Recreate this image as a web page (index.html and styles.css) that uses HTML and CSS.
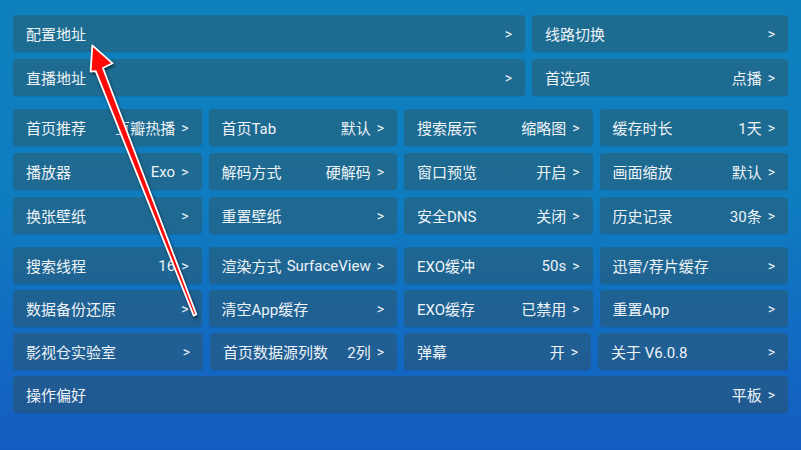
FILE: index.html
```html
<!DOCTYPE html>
<html lang="zh-CN">
<head>
<meta charset="utf-8">
<title>设置</title>
<link rel="stylesheet" href="styles.css">
</head>
<body>
<div class="page">
  <div class="group">
    <div class="row row-2-1">
      <div class="card"><span class="label">配置地址</span><span class="val"><span class="chev">&gt;</span></span></div>
      <div class="card"><span class="label">线路切换</span><span class="val"><span class="chev">&gt;</span></span></div>
    </div>
    <div class="row row-2-1">
      <div class="card"><span class="label">直播地址</span><span class="val"><span class="chev">&gt;</span></span></div>
      <div class="card"><span class="label">首选项</span><span class="val">点播<span class="chev">&gt;</span></span></div>
    </div>
  </div>
  <div class="group">
    <div class="row row-4">
      <div class="card"><span class="label">首页推荐</span><span class="val">豆瓣热播<span class="chev">&gt;</span></span></div>
      <div class="card"><span class="label">首页Tab</span><span class="val">默认<span class="chev">&gt;</span></span></div>
      <div class="card"><span class="label">搜索展示</span><span class="val">缩略图<span class="chev">&gt;</span></span></div>
      <div class="card"><span class="label">缓存时长</span><span class="val">1天<span class="chev">&gt;</span></span></div>
    </div>
    <div class="row row-4">
      <div class="card"><span class="label">播放器</span><span class="val">Exo<span class="chev">&gt;</span></span></div>
      <div class="card"><span class="label">解码方式</span><span class="val">硬解码<span class="chev">&gt;</span></span></div>
      <div class="card"><span class="label">窗口预览</span><span class="val">开启<span class="chev">&gt;</span></span></div>
      <div class="card"><span class="label">画面缩放</span><span class="val">默认<span class="chev">&gt;</span></span></div>
    </div>
    <div class="row row-4">
      <div class="card"><span class="label">换张壁纸</span><span class="val"><span class="chev">&gt;</span></span></div>
      <div class="card"><span class="label">重置壁纸</span><span class="val"><span class="chev">&gt;</span></span></div>
      <div class="card"><span class="label">安全DNS</span><span class="val">关闭<span class="chev">&gt;</span></span></div>
      <div class="card"><span class="label">历史记录</span><span class="val">30条<span class="chev">&gt;</span></span></div>
    </div>
  </div>
  <div class="group group-tight">
    <div class="row row-4">
      <div class="card"><span class="label">搜索线程</span><span class="val">16<span class="chev">&gt;</span></span></div>
      <div class="card"><span class="label">渲染方式</span><span class="val">SurfaceView<span class="chev">&gt;</span></span></div>
      <div class="card"><span class="label">EXO缓冲</span><span class="val">50s<span class="chev">&gt;</span></span></div>
      <div class="card"><span class="label">迅雷/荐片缓存</span><span class="val"><span class="chev">&gt;</span></span></div>
    </div>
    <div class="row row-4">
      <div class="card"><span class="label">数据备份还原</span><span class="val"><span class="chev">&gt;</span></span></div>
      <div class="card"><span class="label">清空App缓存</span><span class="val"><span class="chev">&gt;</span></span></div>
      <div class="card"><span class="label">EXO缓存</span><span class="val">已禁用<span class="chev">&gt;</span></span></div>
      <div class="card"><span class="label">重置App</span><span class="val"><span class="chev">&gt;</span></span></div>
    </div>
    <div class="row row-4b">
      <div class="card"><span class="label">影视仓实验室</span><span class="val"><span class="chev">&gt;</span></span></div>
      <div class="card"><span class="label">首页数据源列数</span><span class="val">2列<span class="chev">&gt;</span></span></div>
      <div class="card"><span class="label">弹幕</span><span class="val">开<span class="chev">&gt;</span></span></div>
      <div class="card"><span class="label">关于 V6.0.8</span><span class="val"><span class="chev">&gt;</span></span></div>
    </div>
    <div class="row row-1">
      <div class="card"><span class="label">操作偏好</span><span class="val">平板<span class="chev">&gt;</span></span></div>
    </div>
  </div>
</div>
<svg class="arrow" width="801" height="450" viewBox="0 0 801 450" xmlns="http://www.w3.org/2000/svg">
  <polygon points="92.3,45.3 112.6,63.3 102.9,68.0 196.3,314.4 193.7,315.6 95.7,71.2 90.6,71.6" fill="#ff0808" stroke="#ffffff" stroke-width="1.8" stroke-linejoin="round"/>
</svg>
</body>
</html>
```

FILE: styles.css
```css
html, body {
  margin: 0;
  padding: 0;
}
body {
  width: 801px;
  height: 450px;
  overflow: hidden;
  background: linear-gradient(180deg, #0e81bd 0%, #0f7cc0 45%, #1268c2 80%, #155cc0 100%);
  font-family: Roboto, "Noto Sans CJK SC", sans-serif;
  color: #eef3f7;
  position: relative;
}
.page {
  padding: 15px 13px 0 13px;
}
.group {
  display: flex;
  flex-direction: column;
  gap: 7px;
  margin-bottom: 13px;
}
.group-tight {
  gap: 6px;
}
.row {
  display: grid;
  gap: 7px;
}
.row-2-1 {
  grid-template-columns: 2fr 1fr;
}
.row-4 {
  grid-template-columns: repeat(4, 1fr);
}
.row-4b {
  grid-template-columns: 190px 187px 187px 190px;
}
.row-1 {
  grid-template-columns: 1fr;
}
.card {
  height: 37px;
  box-sizing: border-box;
  padding: 0 13px;
  border-radius: 4px;
  background: rgba(55, 75, 72, 0.38);
  box-shadow: 0 1px 1px rgba(0, 0, 0, 0.08);
  display: flex;
  align-items: center;
  justify-content: space-between;
  gap: 4px;
  font-size: 15px;
  white-space: nowrap;
}
.val {
  display: flex;
  align-items: center;
  gap: 6px;
}
.chev {
  font-size: 14px;
}
.arrow {
  position: absolute;
  left: 0;
  top: 0;
  filter: drop-shadow(1px 2px 1.5px rgba(0, 0, 0, 0.55));
}
```
